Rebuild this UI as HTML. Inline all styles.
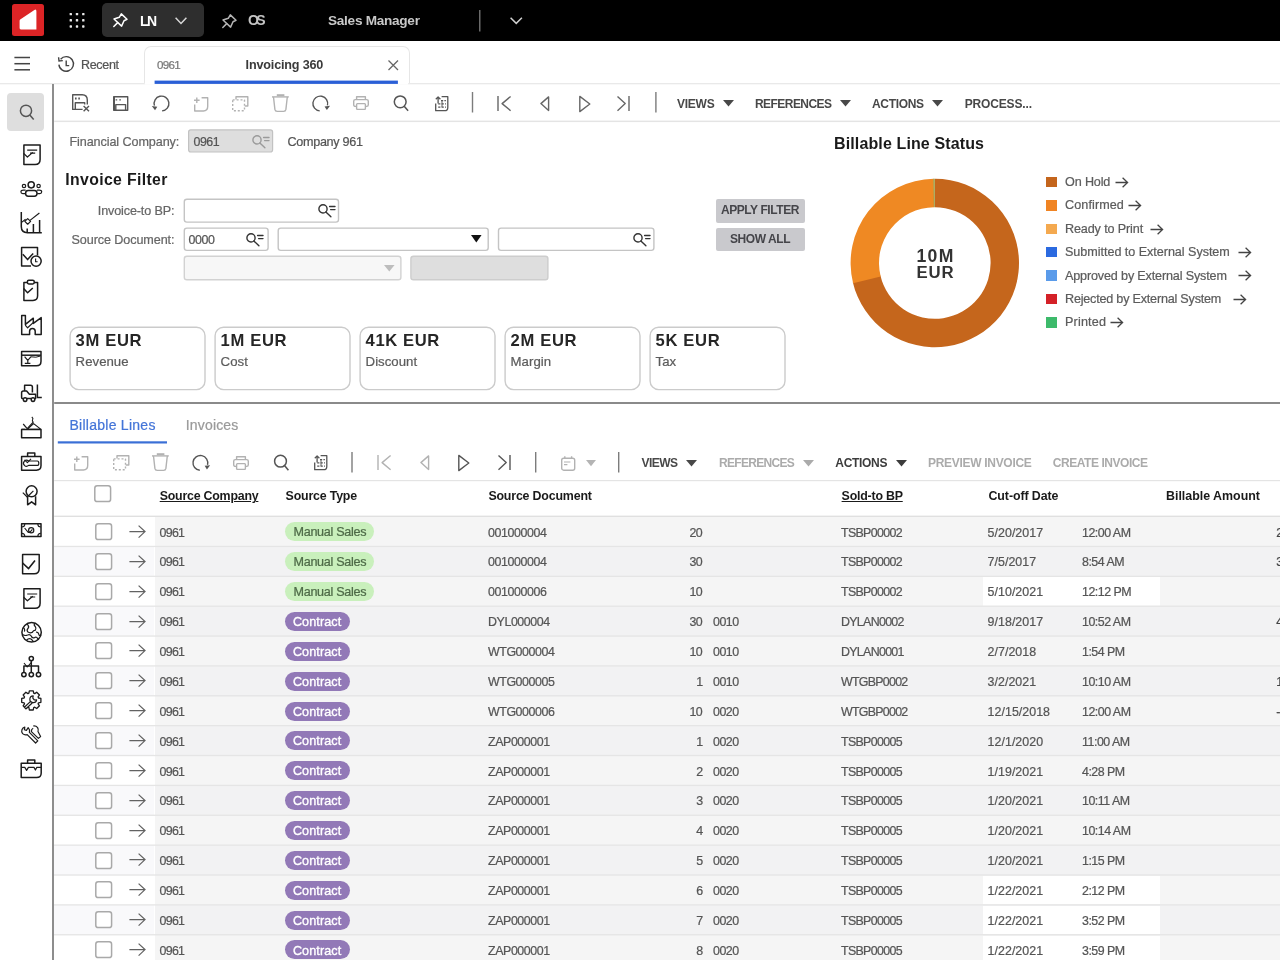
<!DOCTYPE html>
<html><head><meta charset="utf-8"><title>Invoicing 360</title><style>
html,body{margin:0;padding:0;background:#fff;}
body{font-family:"Liberation Sans",sans-serif;}
#root{position:relative;width:1280px;height:960px;overflow:hidden;background:#fff;will-change:transform;}
.t{position:absolute;white-space:nowrap;line-height:1;-webkit-text-stroke:0.22px;}
.tb{-webkit-text-stroke:0;}
.b{position:absolute;box-sizing:border-box;}
svg{overflow:visible;}
</style></head><body><div id="root">
<div class="b" style="left:0px;top:0px;width:1280px;height:40.8px;background:#000;"></div>
<div class="b" style="left:12.2px;top:4px;width:31.7px;height:31.9px;background:#dc2426;border-radius:2.5px;"></div>
<svg class="b" style="left:12px;top:4px;" width="32" height="32" viewBox="0 0 32 32"><path d="M8.2 15.6 L22.4 5.9 Q24.4 4.9 24.4 7.2 L24.4 25.4 L8.9 25.4 Q7.6 25.4 7.6 24.1 L7.6 17 Q7.6 16 8.2 15.6Z" fill="#fff"/></svg>
<svg class="b" style="left:0px;top:0px;" width="100" height="41" viewBox="0 0 100 41"><rect x="69.6" y="12.9" width="2.4" height="2.4" rx="0.6" fill="#e8e8e8"/><rect x="69.6" y="19.1" width="2.4" height="2.4" rx="0.6" fill="#e8e8e8"/><rect x="69.6" y="25.3" width="2.4" height="2.4" rx="0.6" fill="#e8e8e8"/><rect x="75.8" y="12.9" width="2.4" height="2.4" rx="0.6" fill="#e8e8e8"/><rect x="75.8" y="19.1" width="2.4" height="2.4" rx="0.6" fill="#e8e8e8"/><rect x="75.8" y="25.3" width="2.4" height="2.4" rx="0.6" fill="#e8e8e8"/><rect x="82.1" y="12.9" width="2.4" height="2.4" rx="0.6" fill="#e8e8e8"/><rect x="82.1" y="19.1" width="2.4" height="2.4" rx="0.6" fill="#e8e8e8"/><rect x="82.1" y="25.3" width="2.4" height="2.4" rx="0.6" fill="#e8e8e8"/></svg>
<div class="b" style="left:102px;top:3px;width:102px;height:34px;background:#2e2e2e;border-radius:5px;"></div>
<svg class="b" style="left:113px;top:13px;" width="14" height="14" viewBox="0 0 14 14"><g fill="none" stroke="#fff" stroke-width="1.5" stroke-linejoin="round" stroke-linecap="round"><path d="M8.3 0.9 L14 6.3 L11 7.7 L8.6 13.1 L1.0 6 L6.3 4.3 Z"/><path d="M4.7 9.6 L0.8 13.5"/></g></svg>
<span class="t tb" style="left:140.00px;top:14.00px;font-size:14px;color:#fff;letter-spacing:-1.663px;font-weight:700;">LN</span>
<svg class="b" style="left:174.5px;top:17.3px;" width="12" height="7.5" viewBox="0 0 12 7.5"><path d="M0.6 0.8 L6 6.4 L11.4 0.8" fill="none" stroke="#d8d8d8" stroke-width="1.5"/></svg>
<svg class="b" style="left:222px;top:13.5px;" width="14" height="14" viewBox="0 0 14 14"><g fill="none" stroke="#b4b4b4" stroke-width="1.5" stroke-linejoin="round" stroke-linecap="round"><path d="M8.3 0.9 L14 6.3 L11 7.7 L8.6 13.1 L1.0 6 L6.3 4.3 Z"/><path d="M4.7 9.6 L0.8 13.5"/></g></svg>
<span class="t tb" style="left:248.00px;top:13.00px;font-size:14px;color:#c4c4c4;letter-spacing:-2.628px;font-weight:700;">OS</span>
<span class="t tb" style="left:328.00px;top:14.00px;font-size:13.6px;color:#c8c8c8;letter-spacing:-0.271px;font-weight:700;">Sales Manager</span>
<svg class="b" style="left:510px;top:17.3px;" width="12.5" height="7.5" viewBox="0 0 12.5 7.5"><path d="M0.6 0.8 L6.25 6.4 L11.9 0.8" fill="none" stroke="#d0d0d0" stroke-width="1.5"/></svg>
<svg class="b" style="left:57px;top:54.5px;" width="18" height="18" viewBox="0 0 18 18"><path d="M3.6 4.2 A7.3 7.3 0 1 1 1.9 9.6" fill="none" stroke="#444" stroke-width="1.4"/><path d="M1.6 2.2 L2.0 6.0 L5.8 5.6" fill="none" stroke="#444" stroke-width="1.4"/><path d="M9.2 5.4 L9.2 10.6 L12.2 10.6" fill="none" stroke="#444" stroke-width="1.4"/></svg>
<span class="t" style="left:81.00px;top:59.00px;font-size:12.5px;color:#555;letter-spacing:-0.321px;">Recent</span>
<div class="b" style="left:143.5px;top:46px;width:266px;height:38.2px;background:#fff;border:1.3px solid #e6e6e6;border-bottom:none;border-radius:7px 7px 0 0;"></div>
<span class="t" style="left:157.00px;top:59.00px;font-size:11.6px;color:#777;letter-spacing:-0.735px;">0961</span>
<span class="t tb" style="left:245.60px;top:59.00px;font-size:12.6px;color:#3a3a3a;letter-spacing:-0.169px;font-weight:700;">Invoicing 360</span>
<svg class="b" style="left:388px;top:60px;" width="10.5" height="10.5" viewBox="0 0 10.5 10.5"><path d="M0.5 0.5 L10 10 M10 0.5 L0.5 10" stroke="#666" stroke-width="1.3" fill="none"/></svg>
<div class="b" style="left:7px;top:93px;width:36.5px;height:37.5px;background:#dedede;border-radius:4px;"></div>
<span class="t tb" style="left:677.00px;top:98.00px;font-size:12px;color:#484848;letter-spacing:-0.243px;font-weight:700;">VIEWS</span>
<svg class="b" style="left:722.5px;top:100px;" width="11" height="6.6" viewBox="0 0 11 6.6"><path d="M0 0 L11 0 L5.5 6.6 Z" fill="#484848"/></svg>
<span class="t tb" style="left:755.00px;top:98.00px;font-size:12px;color:#484848;letter-spacing:-0.557px;font-weight:700;">REFERENCES</span>
<svg class="b" style="left:839.6px;top:100px;" width="11" height="6.6" viewBox="0 0 11 6.6"><path d="M0 0 L11 0 L5.5 6.6 Z" fill="#484848"/></svg>
<span class="t tb" style="left:872.00px;top:98.00px;font-size:12px;color:#484848;letter-spacing:-0.333px;font-weight:700;">ACTIONS</span>
<svg class="b" style="left:932.3px;top:100px;" width="11" height="6.6" viewBox="0 0 11 6.6"><path d="M0 0 L11 0 L5.5 6.6 Z" fill="#484848"/></svg>
<span class="t tb" style="left:964.70px;top:98.00px;font-size:12px;color:#484848;letter-spacing:-0.154px;font-weight:700;">PROCESS...</span>
<span class="t" style="left:69.40px;top:136.00px;font-size:12.6px;color:#666;letter-spacing:-0.080px;">Financial Company:</span>
<svg class="b" style="left:0px;top:0px;" width="1" height="1" viewBox="0 0 1 1"><rect x="188.60" y="129.90" width="84.00" height="22.10" rx="2.2" fill="#dedede" stroke="#c2c2c2" stroke-width="1.2"/></svg>
<span class="t" style="left:193.50px;top:136.00px;font-size:12.4px;color:#555;letter-spacing:-0.462px;">0961</span>
<span class="t" style="left:287.50px;top:136.00px;font-size:12.6px;color:#555;letter-spacing:-0.295px;">Company 961</span>
<span class="t tb" style="left:65.30px;top:172.00px;font-size:15.8px;color:#1a1a1a;letter-spacing:0.349px;font-weight:700;">Invoice Filter</span>
<span class="t" style="left:97.80px;top:205.00px;font-size:12.6px;color:#666;letter-spacing:-0.134px;">Invoice-to BP:</span>
<span class="t" style="left:71.50px;top:234.00px;font-size:12.6px;color:#666;letter-spacing:-0.090px;">Source Document:</span>
<svg class="b" style="left:0px;top:0px;" width="1" height="1" viewBox="0 0 1 1"><rect x="184.30" y="199.20" width="154.20" height="22.90" rx="2.6" fill="#fff" stroke="#c4c4c4" stroke-width="1.4"/></svg>
<svg class="b" style="left:0px;top:0px;" width="1" height="1" viewBox="0 0 1 1"><rect x="184.30" y="228.10" width="83.80" height="22.30" rx="2.6" fill="#fff" stroke="#c4c4c4" stroke-width="1.4"/></svg>
<span class="t" style="left:188.60px;top:234.00px;font-size:12.4px;color:#555;letter-spacing:-0.429px;">0000</span>
<svg class="b" style="left:0px;top:0px;" width="1" height="1" viewBox="0 0 1 1"><rect x="278.20" y="228.10" width="210.00" height="22.30" rx="2.6" fill="#fff" stroke="#c4c4c4" stroke-width="1.4"/></svg>
<svg class="b" style="left:471px;top:235.2px;" width="10.6" height="7.4" viewBox="0 0 10.6 7.4"><path d="M0 0 L10.6 0 L5.3 7.4 Z" fill="#111"/></svg>
<svg class="b" style="left:0px;top:0px;" width="1" height="1" viewBox="0 0 1 1"><rect x="498.50" y="228.10" width="155.40" height="22.30" rx="2.6" fill="#fff" stroke="#c4c4c4" stroke-width="1.4"/></svg>
<svg class="b" style="left:0px;top:0px;" width="1" height="1" viewBox="0 0 1 1"><rect x="184.30" y="256.30" width="216.60" height="23.50" rx="2.6" fill="#f7f7f7" stroke="#d2d2d2" stroke-width="1.4"/></svg>
<svg class="b" style="left:383.5px;top:264.8px;" width="10.6" height="6.6" viewBox="0 0 10.6 6.6"><path d="M0 0 L10.6 0 L5.3 6.6 Z" fill="#bdbdbd"/></svg>
<svg class="b" style="left:0px;top:0px;" width="1" height="1" viewBox="0 0 1 1"><rect x="410.90" y="256.20" width="137.00" height="23.60" rx="2.6" fill="#dedede" stroke="#cdcdcd" stroke-width="1.4"/></svg>
<svg class="b" style="left:251.6px;top:135.2px;" width="17.5" height="13" viewBox="0 0 17.5 13"><g fill="none" stroke="#9a9a9a" stroke-width="1.4" stroke-linecap="round"><circle cx="5" cy="4.9" r="4.1"/><path d="M7.9 7.9 L12.9 12.7"/><path d="M11.6 2.5 L17 2.5 M12.6 5.6 L17 5.6"/></g></svg>
<svg class="b" style="left:318px;top:203.8px;" width="17.5" height="13" viewBox="0 0 17.5 13"><g fill="none" stroke="#333" stroke-width="1.4" stroke-linecap="round"><circle cx="5" cy="4.9" r="4.1"/><path d="M7.9 7.9 L12.9 12.7"/><path d="M11.6 2.5 L17 2.5 M12.6 5.6 L17 5.6"/></g></svg>
<svg class="b" style="left:246.4px;top:232.6px;" width="17.5" height="13" viewBox="0 0 17.5 13"><g fill="none" stroke="#333" stroke-width="1.4" stroke-linecap="round"><circle cx="5" cy="4.9" r="4.1"/><path d="M7.9 7.9 L12.9 12.7"/><path d="M11.6 2.5 L17 2.5 M12.6 5.6 L17 5.6"/></g></svg>
<svg class="b" style="left:633px;top:232.6px;" width="17.5" height="13" viewBox="0 0 17.5 13"><g fill="none" stroke="#333" stroke-width="1.4" stroke-linecap="round"><circle cx="5" cy="4.9" r="4.1"/><path d="M7.9 7.9 L12.9 12.7"/><path d="M11.6 2.5 L17 2.5 M12.6 5.6 L17 5.6"/></g></svg>
<div class="b" style="left:715.6px;top:198.8px;width:89.2px;height:23.8px;background:#c9c9cd;border-radius:2px;"></div>
<span class="t tb" style="left:720.90px;top:204.00px;font-size:12px;color:#45454a;letter-spacing:-0.421px;font-weight:700;">APPLY FILTER</span>
<div class="b" style="left:715.6px;top:227.9px;width:89.2px;height:23px;background:#c9c9cd;border-radius:2px;"></div>
<span class="t tb" style="left:730.00px;top:233.00px;font-size:12px;color:#45454a;letter-spacing:-0.421px;font-weight:700;">SHOW ALL</span>
<svg class="b" style="left:0px;top:0px;" width="1" height="1" viewBox="0 0 1 1"><rect x="70.10" y="327.20" width="134.90" height="62.40" rx="8.5" fill="#fff" stroke="#cbcbcb" stroke-width="1.4"/></svg>
<span class="t tb" style="left:75.60px;top:333.00px;font-size:16.6px;color:#262626;letter-spacing:0.656px;font-weight:700;">3M EUR</span>
<span class="t" style="left:75.60px;top:355.00px;font-size:13.2px;color:#5c5c5c;letter-spacing:0.027px;">Revenue</span>
<svg class="b" style="left:0px;top:0px;" width="1" height="1" viewBox="0 0 1 1"><rect x="215.10" y="327.20" width="134.90" height="62.40" rx="8.5" fill="#fff" stroke="#cbcbcb" stroke-width="1.4"/></svg>
<span class="t tb" style="left:220.60px;top:333.00px;font-size:16.6px;color:#262626;letter-spacing:0.656px;font-weight:700;">1M EUR</span>
<span class="t" style="left:220.60px;top:355.00px;font-size:13.2px;color:#5c5c5c;letter-spacing:0.027px;">Cost</span>
<svg class="b" style="left:0px;top:0px;" width="1" height="1" viewBox="0 0 1 1"><rect x="360.10" y="327.20" width="134.90" height="62.40" rx="8.5" fill="#fff" stroke="#cbcbcb" stroke-width="1.4"/></svg>
<span class="t tb" style="left:365.60px;top:333.00px;font-size:16.6px;color:#262626;letter-spacing:0.611px;font-weight:700;">41K EUR</span>
<span class="t" style="left:365.60px;top:355.00px;font-size:13.2px;color:#5c5c5c;letter-spacing:0.022px;">Discount</span>
<svg class="b" style="left:0px;top:0px;" width="1" height="1" viewBox="0 0 1 1"><rect x="505.10" y="327.20" width="134.90" height="62.40" rx="8.5" fill="#fff" stroke="#cbcbcb" stroke-width="1.4"/></svg>
<span class="t tb" style="left:510.60px;top:333.00px;font-size:16.6px;color:#262626;letter-spacing:0.656px;font-weight:700;">2M EUR</span>
<span class="t" style="left:510.60px;top:355.00px;font-size:13.2px;color:#5c5c5c;letter-spacing:0.024px;">Margin</span>
<svg class="b" style="left:0px;top:0px;" width="1" height="1" viewBox="0 0 1 1"><rect x="650.10" y="327.20" width="134.90" height="62.40" rx="8.5" fill="#fff" stroke="#cbcbcb" stroke-width="1.4"/></svg>
<span class="t tb" style="left:655.60px;top:333.00px;font-size:16.6px;color:#262626;letter-spacing:0.636px;font-weight:700;">5K EUR</span>
<span class="t" style="left:655.60px;top:355.00px;font-size:13.2px;color:#5c5c5c;letter-spacing:0.031px;">Tax</span>
<span class="t tb" style="left:834.00px;top:136.00px;font-size:16px;color:#1a1a1a;letter-spacing:0.127px;font-weight:700;">Billable Line Status</span>
<svg class="b" style="left:0px;top:0px;pointer-events:none;" width="1280" height="400" viewBox="0 0 1280 400"><path d="M934.80 178.80 A84.2 84.2 0 1 1 852.76 281.94 L880.43 275.55 A55.8 55.8 0 1 0 934.80 207.20Z" fill="#c5661c"/><path d="M853.10 283.37 A84.2 84.2 0 0 1 933.77 178.81 L934.12 207.20 A55.8 55.8 0 0 0 880.66 276.50Z" fill="#ef8923"/><path d="M933.33 178.81 A84.2 84.2 0 0 1 934.80 178.80 L934.80 207.20 A55.8 55.8 0 0 0 933.83 207.21Z" fill="#9aa04a"/></svg>
<span class="t tb" style="left:916.40px;top:248.00px;font-size:17.6px;color:#333;letter-spacing:1.381px;font-weight:700;">10M</span>
<span class="t tb" style="left:916.40px;top:265.00px;font-size:16.8px;color:#333;letter-spacing:0.864px;font-weight:700;">EUR</span>
<div class="b" style="left:1046.3px;top:176.60000000000002px;width:10.5px;height:10.5px;background:#c4651c;"></div>
<span class="t" style="left:1065.00px;top:176.00px;font-size:12.6px;color:#5c5c5c;letter-spacing:-0.137px;">On Hold</span>
<svg class="b" style="left:1115.4px;top:176.60000000000002px;" width="13.2" height="11" viewBox="0 0 13.2 11"><path d="M0.5 5.5 L12.4 5.5 M7.6 0.7 L12.6 5.5 L7.6 10.3" fill="none" stroke="#444" stroke-width="1.3"/></svg>
<div class="b" style="left:1046.3px;top:200.05px;width:10.5px;height:10.5px;background:#f08423;"></div>
<span class="t" style="left:1065.00px;top:199.00px;font-size:12.6px;color:#5c5c5c;letter-spacing:0.097px;">Confirmed</span>
<svg class="b" style="left:1127.8px;top:200.05px;" width="13.2" height="11" viewBox="0 0 13.2 11"><path d="M0.5 5.5 L12.4 5.5 M7.6 0.7 L12.6 5.5 L7.6 10.3" fill="none" stroke="#444" stroke-width="1.3"/></svg>
<div class="b" style="left:1046.3px;top:223.50000000000003px;width:10.5px;height:10.5px;background:#f4a94f;"></div>
<span class="t" style="left:1065.00px;top:223.00px;font-size:12.6px;color:#5c5c5c;letter-spacing:-0.126px;">Ready to Print</span>
<svg class="b" style="left:1149.8px;top:223.50000000000003px;" width="13.2" height="11" viewBox="0 0 13.2 11"><path d="M0.5 5.5 L12.4 5.5 M7.6 0.7 L12.6 5.5 L7.6 10.3" fill="none" stroke="#444" stroke-width="1.3"/></svg>
<div class="b" style="left:1046.3px;top:246.95000000000002px;width:10.5px;height:10.5px;background:#2b6ae0;"></div>
<span class="t" style="left:1065.00px;top:246.00px;font-size:12.6px;color:#5c5c5c;letter-spacing:-0.040px;">Submitted to External System</span>
<svg class="b" style="left:1238px;top:246.95000000000002px;" width="13.2" height="11" viewBox="0 0 13.2 11"><path d="M0.5 5.5 L12.4 5.5 M7.6 0.7 L12.6 5.5 L7.6 10.3" fill="none" stroke="#444" stroke-width="1.3"/></svg>
<div class="b" style="left:1046.3px;top:270.40000000000003px;width:10.5px;height:10.5px;background:#5a9bea;"></div>
<span class="t" style="left:1065.00px;top:270.00px;font-size:12.6px;color:#5c5c5c;letter-spacing:-0.153px;">Approved by External System</span>
<svg class="b" style="left:1238px;top:270.40000000000003px;" width="13.2" height="11" viewBox="0 0 13.2 11"><path d="M0.5 5.5 L12.4 5.5 M7.6 0.7 L12.6 5.5 L7.6 10.3" fill="none" stroke="#444" stroke-width="1.3"/></svg>
<div class="b" style="left:1046.3px;top:293.85px;width:10.5px;height:10.5px;background:#d42128;"></div>
<span class="t" style="left:1065.00px;top:293.00px;font-size:12.6px;color:#5c5c5c;letter-spacing:-0.207px;">Rejected by External System</span>
<svg class="b" style="left:1233.2px;top:293.85px;" width="13.2" height="11" viewBox="0 0 13.2 11"><path d="M0.5 5.5 L12.4 5.5 M7.6 0.7 L12.6 5.5 L7.6 10.3" fill="none" stroke="#444" stroke-width="1.3"/></svg>
<div class="b" style="left:1046.3px;top:317.3px;width:10.5px;height:10.5px;background:#3dba6b;"></div>
<span class="t" style="left:1065.00px;top:316.00px;font-size:12.6px;color:#5c5c5c;letter-spacing:0.179px;">Printed</span>
<svg class="b" style="left:1109.8px;top:317.3px;" width="13.2" height="11" viewBox="0 0 13.2 11"><path d="M0.5 5.5 L12.4 5.5 M7.6 0.7 L12.6 5.5 L7.6 10.3" fill="none" stroke="#444" stroke-width="1.3"/></svg>
<span class="t" style="left:69.40px;top:418.00px;font-size:14px;color:#4475d8;letter-spacing:0.269px;">Billable Lines</span>
<span class="t" style="left:185.80px;top:418.00px;font-size:14px;color:#9a9a9a;letter-spacing:0.163px;">Invoices</span>
<span class="t tb" style="left:641.60px;top:457.00px;font-size:12px;color:#484848;letter-spacing:-0.593px;font-weight:700;">VIEWS</span>
<svg class="b" style="left:685.8px;top:459.6px;" width="11" height="6.6" viewBox="0 0 11 6.6"><path d="M0 0 L11 0 L5.5 6.6 Z" fill="#484848"/></svg>
<span class="t tb" style="left:719.00px;top:457.00px;font-size:12px;color:#ababab;letter-spacing:-0.702px;font-weight:700;">REFERENCES</span>
<svg class="b" style="left:803px;top:459.6px;" width="11" height="6.6" viewBox="0 0 11 6.6"><path d="M0 0 L11 0 L5.5 6.6 Z" fill="#ababab"/></svg>
<span class="t tb" style="left:835.30px;top:457.00px;font-size:12px;color:#3c3c3c;letter-spacing:-0.317px;font-weight:700;">ACTIONS</span>
<svg class="b" style="left:896px;top:459.6px;" width="11" height="6.6" viewBox="0 0 11 6.6"><path d="M0 0 L11 0 L5.5 6.6 Z" fill="#3c3c3c"/></svg>
<span class="t tb" style="left:928.00px;top:457.00px;font-size:12px;color:#ababab;letter-spacing:-0.301px;font-weight:700;">PREVIEW INVOICE</span>
<span class="t tb" style="left:1052.80px;top:457.00px;font-size:12px;color:#ababab;letter-spacing:-0.456px;font-weight:700;">CREATE INVOICE</span>
<svg class="b" style="left:585.5px;top:459.6px;" width="10" height="6.2" viewBox="0 0 10 6.2"><path d="M0 0 L10 0 L5 6.2 Z" fill="#b4b4b4"/></svg>
<span class="t tb" style="left:159.70px;top:490.00px;font-size:12.4px;color:#1a1a1a;letter-spacing:-0.229px;font-weight:700;text-decoration:underline;text-decoration-thickness:1px;text-underline-offset:1px;">Source Company</span>
<span class="t tb" style="left:285.60px;top:490.00px;font-size:12.4px;color:#1a1a1a;letter-spacing:-0.191px;font-weight:700;">Source Type</span>
<span class="t tb" style="left:488.40px;top:490.00px;font-size:12.4px;color:#1a1a1a;letter-spacing:-0.179px;font-weight:700;">Source Document</span>
<span class="t tb" style="left:841.60px;top:490.00px;font-size:12.4px;color:#1a1a1a;letter-spacing:-0.219px;font-weight:700;text-decoration:underline;text-decoration-thickness:1px;text-underline-offset:1px;">Sold-to BP</span>
<span class="t tb" style="left:988.50px;top:490.00px;font-size:12.4px;color:#1a1a1a;letter-spacing:-0.086px;font-weight:700;">Cut-off Date</span>
<span class="t tb" style="left:1166.00px;top:490.00px;font-size:12.4px;color:#1a1a1a;letter-spacing:0.006px;font-weight:700;">Billable Amount</span>
<svg class="b" style="left:93.5px;top:485.2px;" width="17.4" height="17.4" viewBox="0 0 17.4 17.4"><rect x="0.8" y="0.8" width="15.8" height="15.8" rx="2.4" fill="#fff" stroke="#a9a9a9" stroke-width="1.5"/></svg>
<div class="b" style="left:54.2px;top:516.8px;width:100.3px;height:29.9px;background:#ffffff;"></div>
<div class="b" style="left:154.5px;top:516.8px;width:1126px;height:29.9px;background:#f5f5f5;"></div>
<svg class="b" style="left:94.8px;top:522.9999999999999px;" width="17.4" height="17.4" viewBox="0 0 17.4 17.4"><rect x="0.8" y="0.8" width="15.8" height="15.8" rx="2.4" fill="#fff" stroke="#a9a9a9" stroke-width="1.5"/></svg>
<svg class="b" style="left:128.7px;top:524.9px;" width="17" height="13.2" viewBox="0 0 17 13.2"><path d="M0.4 6.6 L15.8 6.6 M9.6 0.6 L16 6.6 L9.6 12.6" fill="none" stroke="#626262" stroke-width="1.25"/></svg>
<span class="t" style="left:159.50px;top:527.00px;font-size:12.4px;color:#555;letter-spacing:-0.695px;">0961</span>
<div class="b" style="left:284.6px;top:522.3px;width:89.6px;height:19px;background:#c9f0bc;border-radius:10px;"></div>
<span class="t" style="left:293.50px;top:526.00px;font-size:12.6px;color:#4d6a47;letter-spacing:-0.304px;">Manual Sales</span>
<span class="t" style="left:488.00px;top:527.00px;font-size:12.4px;color:#555;letter-spacing:-0.384px;">001000004</span>
<span class="t" style="left:689.59px;top:527.00px;font-size:12.4px;color:#555;letter-spacing:-0.682px;">20</span>
<span class="t" style="left:841.00px;top:527.00px;font-size:12.4px;color:#555;letter-spacing:-0.659px;">TSBP00002</span>
<span class="t" style="left:987.60px;top:527.00px;font-size:12.4px;color:#555;letter-spacing:0.042px;">5/20/2017</span>
<span class="t" style="left:1082.00px;top:527.00px;font-size:12.4px;color:#555;letter-spacing:-0.485px;">12:00 AM</span>
<span class="t" style="left:1276.30px;top:527.00px;font-size:12.4px;color:#444;">2</span>
<div class="b" style="left:54.2px;top:546.67px;width:100.3px;height:29.9px;background:#f9f9fb;"></div>
<div class="b" style="left:154.5px;top:546.67px;width:1126px;height:29.9px;background:#f2f2f3;"></div>
<svg class="b" style="left:94.8px;top:552.8699999999999px;" width="17.4" height="17.4" viewBox="0 0 17.4 17.4"><rect x="0.8" y="0.8" width="15.8" height="15.8" rx="2.4" fill="#fff" stroke="#a9a9a9" stroke-width="1.5"/></svg>
<svg class="b" style="left:128.7px;top:554.77px;" width="17" height="13.2" viewBox="0 0 17 13.2"><path d="M0.4 6.6 L15.8 6.6 M9.6 0.6 L16 6.6 L9.6 12.6" fill="none" stroke="#626262" stroke-width="1.25"/></svg>
<span class="t" style="left:159.50px;top:556.00px;font-size:12.4px;color:#555;letter-spacing:-0.695px;">0961</span>
<div class="b" style="left:284.6px;top:552.17px;width:89.6px;height:19px;background:#c9f0bc;border-radius:10px;"></div>
<span class="t" style="left:293.50px;top:556.00px;font-size:12.6px;color:#4d6a47;letter-spacing:-0.304px;">Manual Sales</span>
<span class="t" style="left:488.00px;top:556.00px;font-size:12.4px;color:#555;letter-spacing:-0.384px;">001000004</span>
<span class="t" style="left:689.59px;top:556.00px;font-size:12.4px;color:#555;letter-spacing:-0.682px;">30</span>
<span class="t" style="left:841.00px;top:556.00px;font-size:12.4px;color:#555;letter-spacing:-0.659px;">TSBP00002</span>
<span class="t" style="left:987.60px;top:556.00px;font-size:12.4px;color:#555;letter-spacing:0.042px;">7/5/2017</span>
<span class="t" style="left:1082.00px;top:556.00px;font-size:12.4px;color:#555;letter-spacing:-0.491px;">8:54 AM</span>
<span class="t" style="left:1276.30px;top:556.00px;font-size:12.4px;color:#444;">3</span>
<div class="b" style="left:54.2px;top:576.54px;width:100.3px;height:29.9px;background:#ffffff;"></div>
<div class="b" style="left:154.5px;top:576.54px;width:1126px;height:29.9px;background:#f5f5f5;"></div>
<div class="b" style="left:982.8px;top:577.14px;width:177px;height:28.6px;background:#fff;"></div>
<svg class="b" style="left:94.8px;top:582.7399999999999px;" width="17.4" height="17.4" viewBox="0 0 17.4 17.4"><rect x="0.8" y="0.8" width="15.8" height="15.8" rx="2.4" fill="#fff" stroke="#a9a9a9" stroke-width="1.5"/></svg>
<svg class="b" style="left:128.7px;top:584.64px;" width="17" height="13.2" viewBox="0 0 17 13.2"><path d="M0.4 6.6 L15.8 6.6 M9.6 0.6 L16 6.6 L9.6 12.6" fill="none" stroke="#626262" stroke-width="1.25"/></svg>
<span class="t" style="left:159.50px;top:586.00px;font-size:12.4px;color:#555;letter-spacing:-0.695px;">0961</span>
<div class="b" style="left:284.6px;top:582.04px;width:89.6px;height:19px;background:#c9f0bc;border-radius:10px;"></div>
<span class="t" style="left:293.50px;top:586.00px;font-size:12.6px;color:#4d6a47;letter-spacing:-0.304px;">Manual Sales</span>
<span class="t" style="left:488.00px;top:586.00px;font-size:12.4px;color:#555;letter-spacing:-0.384px;">001000006</span>
<span class="t" style="left:689.59px;top:586.00px;font-size:12.4px;color:#555;letter-spacing:-0.682px;">10</span>
<span class="t" style="left:841.00px;top:586.00px;font-size:12.4px;color:#555;letter-spacing:-0.659px;">TSBP00002</span>
<span class="t" style="left:987.60px;top:586.00px;font-size:12.4px;color:#555;letter-spacing:0.042px;">5/10/2021</span>
<span class="t" style="left:1082.00px;top:586.00px;font-size:12.4px;color:#555;letter-spacing:-0.491px;">12:12 PM</span>
<div class="b" style="left:54.2px;top:606.41px;width:100.3px;height:29.9px;background:#f9f9fb;"></div>
<div class="b" style="left:154.5px;top:606.41px;width:1126px;height:29.9px;background:#f2f2f3;"></div>
<svg class="b" style="left:94.8px;top:612.6099999999999px;" width="17.4" height="17.4" viewBox="0 0 17.4 17.4"><rect x="0.8" y="0.8" width="15.8" height="15.8" rx="2.4" fill="#fff" stroke="#a9a9a9" stroke-width="1.5"/></svg>
<svg class="b" style="left:128.7px;top:614.51px;" width="17" height="13.2" viewBox="0 0 17 13.2"><path d="M0.4 6.6 L15.8 6.6 M9.6 0.6 L16 6.6 L9.6 12.6" fill="none" stroke="#626262" stroke-width="1.25"/></svg>
<span class="t" style="left:159.50px;top:616.00px;font-size:12.4px;color:#555;letter-spacing:-0.695px;">0961</span>
<div class="b" style="left:284.6px;top:611.91px;width:65.2px;height:19px;background:#9279b7;border-radius:10px;"></div>
<span class="t" style="left:292.90px;top:616.00px;font-size:12.6px;color:#fff;letter-spacing:0.111px;-webkit-text-stroke:0.35px #fff;">Contract</span>
<span class="t" style="left:488.00px;top:616.00px;font-size:12.4px;color:#555;letter-spacing:-0.405px;">DYL000004</span>
<span class="t" style="left:689.59px;top:616.00px;font-size:12.4px;color:#555;letter-spacing:-0.682px;">30</span>
<span class="t" style="left:713.00px;top:616.00px;font-size:12.4px;color:#555;letter-spacing:-0.455px;">0010</span>
<span class="t" style="left:841.00px;top:616.00px;font-size:12.4px;color:#555;letter-spacing:-0.679px;">DYLAN0002</span>
<span class="t" style="left:987.60px;top:616.00px;font-size:12.4px;color:#555;letter-spacing:0.042px;">9/18/2017</span>
<span class="t" style="left:1082.00px;top:616.00px;font-size:12.4px;color:#555;letter-spacing:-0.485px;">10:52 AM</span>
<span class="t" style="left:1276.30px;top:616.00px;font-size:12.4px;color:#444;">4</span>
<div class="b" style="left:54.2px;top:636.28px;width:100.3px;height:29.9px;background:#ffffff;"></div>
<div class="b" style="left:154.5px;top:636.28px;width:1126px;height:29.9px;background:#f5f5f5;"></div>
<svg class="b" style="left:94.8px;top:642.4799999999999px;" width="17.4" height="17.4" viewBox="0 0 17.4 17.4"><rect x="0.8" y="0.8" width="15.8" height="15.8" rx="2.4" fill="#fff" stroke="#a9a9a9" stroke-width="1.5"/></svg>
<svg class="b" style="left:128.7px;top:644.38px;" width="17" height="13.2" viewBox="0 0 17 13.2"><path d="M0.4 6.6 L15.8 6.6 M9.6 0.6 L16 6.6 L9.6 12.6" fill="none" stroke="#626262" stroke-width="1.25"/></svg>
<span class="t" style="left:159.50px;top:646.00px;font-size:12.4px;color:#555;letter-spacing:-0.695px;">0961</span>
<div class="b" style="left:284.6px;top:641.78px;width:65.2px;height:19px;background:#9279b7;border-radius:10px;"></div>
<span class="t" style="left:292.90px;top:646.00px;font-size:12.6px;color:#fff;letter-spacing:0.111px;-webkit-text-stroke:0.35px #fff;">Contract</span>
<span class="t" style="left:488.00px;top:646.00px;font-size:12.4px;color:#555;letter-spacing:-0.434px;">WTG000004</span>
<span class="t" style="left:689.59px;top:646.00px;font-size:12.4px;color:#555;letter-spacing:-0.682px;">10</span>
<span class="t" style="left:713.00px;top:646.00px;font-size:12.4px;color:#555;letter-spacing:-0.455px;">0010</span>
<span class="t" style="left:841.00px;top:646.00px;font-size:12.4px;color:#555;letter-spacing:-0.679px;">DYLAN0001</span>
<span class="t" style="left:987.60px;top:646.00px;font-size:12.4px;color:#555;letter-spacing:0.042px;">2/7/2018</span>
<span class="t" style="left:1082.00px;top:646.00px;font-size:12.4px;color:#555;letter-spacing:-0.498px;">1:54 PM</span>
<div class="b" style="left:54.2px;top:666.15px;width:100.3px;height:29.9px;background:#f9f9fb;"></div>
<div class="b" style="left:154.5px;top:666.15px;width:1126px;height:29.9px;background:#f2f2f3;"></div>
<svg class="b" style="left:94.8px;top:672.3499999999999px;" width="17.4" height="17.4" viewBox="0 0 17.4 17.4"><rect x="0.8" y="0.8" width="15.8" height="15.8" rx="2.4" fill="#fff" stroke="#a9a9a9" stroke-width="1.5"/></svg>
<svg class="b" style="left:128.7px;top:674.25px;" width="17" height="13.2" viewBox="0 0 17 13.2"><path d="M0.4 6.6 L15.8 6.6 M9.6 0.6 L16 6.6 L9.6 12.6" fill="none" stroke="#626262" stroke-width="1.25"/></svg>
<span class="t" style="left:159.50px;top:676.00px;font-size:12.4px;color:#555;letter-spacing:-0.695px;">0961</span>
<div class="b" style="left:284.6px;top:671.65px;width:65.2px;height:19px;background:#9279b7;border-radius:10px;"></div>
<span class="t" style="left:292.90px;top:676.00px;font-size:12.6px;color:#fff;letter-spacing:0.111px;-webkit-text-stroke:0.35px #fff;">Contract</span>
<span class="t" style="left:488.00px;top:676.00px;font-size:12.4px;color:#555;letter-spacing:-0.434px;">WTG000005</span>
<span class="t" style="left:696.14px;top:676.00px;font-size:12.4px;color:#555;letter-spacing:-0.341px;">1</span>
<span class="t" style="left:713.00px;top:676.00px;font-size:12.4px;color:#555;letter-spacing:-0.455px;">0010</span>
<span class="t" style="left:841.00px;top:676.00px;font-size:12.4px;color:#555;letter-spacing:-0.720px;">WTGBP0002</span>
<span class="t" style="left:987.60px;top:676.00px;font-size:12.4px;color:#555;letter-spacing:0.042px;">3/2/2021</span>
<span class="t" style="left:1082.00px;top:676.00px;font-size:12.4px;color:#555;letter-spacing:-0.485px;">10:10 AM</span>
<span class="t" style="left:1276.30px;top:676.00px;font-size:12.4px;color:#444;">1</span>
<div class="b" style="left:54.2px;top:696.02px;width:100.3px;height:29.9px;background:#ffffff;"></div>
<div class="b" style="left:154.5px;top:696.02px;width:1126px;height:29.9px;background:#f5f5f5;"></div>
<svg class="b" style="left:94.8px;top:702.2199999999999px;" width="17.4" height="17.4" viewBox="0 0 17.4 17.4"><rect x="0.8" y="0.8" width="15.8" height="15.8" rx="2.4" fill="#fff" stroke="#a9a9a9" stroke-width="1.5"/></svg>
<svg class="b" style="left:128.7px;top:704.12px;" width="17" height="13.2" viewBox="0 0 17 13.2"><path d="M0.4 6.6 L15.8 6.6 M9.6 0.6 L16 6.6 L9.6 12.6" fill="none" stroke="#626262" stroke-width="1.25"/></svg>
<span class="t" style="left:159.50px;top:706.00px;font-size:12.4px;color:#555;letter-spacing:-0.695px;">0961</span>
<div class="b" style="left:284.6px;top:701.52px;width:65.2px;height:19px;background:#9279b7;border-radius:10px;"></div>
<span class="t" style="left:292.90px;top:706.00px;font-size:12.6px;color:#fff;letter-spacing:0.111px;-webkit-text-stroke:0.35px #fff;">Contract</span>
<span class="t" style="left:488.00px;top:706.00px;font-size:12.4px;color:#555;letter-spacing:-0.434px;">WTG000006</span>
<span class="t" style="left:689.59px;top:706.00px;font-size:12.4px;color:#555;letter-spacing:-0.682px;">10</span>
<span class="t" style="left:713.00px;top:706.00px;font-size:12.4px;color:#555;letter-spacing:-0.455px;">0020</span>
<span class="t" style="left:841.00px;top:706.00px;font-size:12.4px;color:#555;letter-spacing:-0.720px;">WTGBP0002</span>
<span class="t" style="left:987.60px;top:706.00px;font-size:12.4px;color:#555;letter-spacing:0.042px;">12/15/2018</span>
<span class="t" style="left:1082.00px;top:706.00px;font-size:12.4px;color:#555;letter-spacing:-0.485px;">12:00 AM</span>
<span class="t" style="left:1276.30px;top:706.00px;font-size:12.4px;color:#444;">-</span>
<div class="b" style="left:54.2px;top:725.89px;width:100.3px;height:29.9px;background:#f9f9fb;"></div>
<div class="b" style="left:154.5px;top:725.89px;width:1126px;height:29.9px;background:#f2f2f3;"></div>
<svg class="b" style="left:94.8px;top:732.0899999999999px;" width="17.4" height="17.4" viewBox="0 0 17.4 17.4"><rect x="0.8" y="0.8" width="15.8" height="15.8" rx="2.4" fill="#fff" stroke="#a9a9a9" stroke-width="1.5"/></svg>
<svg class="b" style="left:128.7px;top:733.99px;" width="17" height="13.2" viewBox="0 0 17 13.2"><path d="M0.4 6.6 L15.8 6.6 M9.6 0.6 L16 6.6 L9.6 12.6" fill="none" stroke="#626262" stroke-width="1.25"/></svg>
<span class="t" style="left:159.50px;top:736.00px;font-size:12.4px;color:#555;letter-spacing:-0.695px;">0961</span>
<div class="b" style="left:284.6px;top:731.39px;width:65.2px;height:19px;background:#9279b7;border-radius:10px;"></div>
<span class="t" style="left:292.90px;top:735.00px;font-size:12.6px;color:#fff;letter-spacing:0.111px;-webkit-text-stroke:0.35px #fff;">Contract</span>
<span class="t" style="left:488.00px;top:736.00px;font-size:12.4px;color:#555;letter-spacing:-0.405px;">ZAP000001</span>
<span class="t" style="left:696.14px;top:736.00px;font-size:12.4px;color:#555;letter-spacing:-0.341px;">1</span>
<span class="t" style="left:713.00px;top:736.00px;font-size:12.4px;color:#555;letter-spacing:-0.455px;">0020</span>
<span class="t" style="left:841.00px;top:736.00px;font-size:12.4px;color:#555;letter-spacing:-0.659px;">TSBP00005</span>
<span class="t" style="left:987.60px;top:736.00px;font-size:12.4px;color:#555;letter-spacing:0.042px;">12/1/2020</span>
<span class="t" style="left:1082.00px;top:736.00px;font-size:12.4px;color:#555;letter-spacing:-0.476px;">11:00 AM</span>
<div class="b" style="left:54.2px;top:755.76px;width:100.3px;height:29.9px;background:#ffffff;"></div>
<div class="b" style="left:154.5px;top:755.76px;width:1126px;height:29.9px;background:#f5f5f5;"></div>
<svg class="b" style="left:94.8px;top:761.9599999999999px;" width="17.4" height="17.4" viewBox="0 0 17.4 17.4"><rect x="0.8" y="0.8" width="15.8" height="15.8" rx="2.4" fill="#fff" stroke="#a9a9a9" stroke-width="1.5"/></svg>
<svg class="b" style="left:128.7px;top:763.86px;" width="17" height="13.2" viewBox="0 0 17 13.2"><path d="M0.4 6.6 L15.8 6.6 M9.6 0.6 L16 6.6 L9.6 12.6" fill="none" stroke="#626262" stroke-width="1.25"/></svg>
<span class="t" style="left:159.50px;top:766.00px;font-size:12.4px;color:#555;letter-spacing:-0.695px;">0961</span>
<div class="b" style="left:284.6px;top:761.26px;width:65.2px;height:19px;background:#9279b7;border-radius:10px;"></div>
<span class="t" style="left:292.90px;top:765.00px;font-size:12.6px;color:#fff;letter-spacing:0.111px;-webkit-text-stroke:0.35px #fff;">Contract</span>
<span class="t" style="left:488.00px;top:766.00px;font-size:12.4px;color:#555;letter-spacing:-0.405px;">ZAP000001</span>
<span class="t" style="left:696.14px;top:766.00px;font-size:12.4px;color:#555;letter-spacing:-0.341px;">2</span>
<span class="t" style="left:713.00px;top:766.00px;font-size:12.4px;color:#555;letter-spacing:-0.455px;">0020</span>
<span class="t" style="left:841.00px;top:766.00px;font-size:12.4px;color:#555;letter-spacing:-0.659px;">TSBP00005</span>
<span class="t" style="left:987.60px;top:766.00px;font-size:12.4px;color:#555;letter-spacing:0.042px;">1/19/2021</span>
<span class="t" style="left:1082.00px;top:766.00px;font-size:12.4px;color:#555;letter-spacing:-0.498px;">4:28 PM</span>
<div class="b" style="left:54.2px;top:785.6299999999999px;width:100.3px;height:29.9px;background:#f9f9fb;"></div>
<div class="b" style="left:154.5px;top:785.6299999999999px;width:1126px;height:29.9px;background:#f2f2f3;"></div>
<svg class="b" style="left:94.8px;top:791.8299999999998px;" width="17.4" height="17.4" viewBox="0 0 17.4 17.4"><rect x="0.8" y="0.8" width="15.8" height="15.8" rx="2.4" fill="#fff" stroke="#a9a9a9" stroke-width="1.5"/></svg>
<svg class="b" style="left:128.7px;top:793.7299999999999px;" width="17" height="13.2" viewBox="0 0 17 13.2"><path d="M0.4 6.6 L15.8 6.6 M9.6 0.6 L16 6.6 L9.6 12.6" fill="none" stroke="#626262" stroke-width="1.25"/></svg>
<span class="t" style="left:159.50px;top:795.00px;font-size:12.4px;color:#555;letter-spacing:-0.695px;">0961</span>
<div class="b" style="left:284.6px;top:791.1299999999999px;width:65.2px;height:19px;background:#9279b7;border-radius:10px;"></div>
<span class="t" style="left:292.90px;top:795.00px;font-size:12.6px;color:#fff;letter-spacing:0.111px;-webkit-text-stroke:0.35px #fff;">Contract</span>
<span class="t" style="left:488.00px;top:795.00px;font-size:12.4px;color:#555;letter-spacing:-0.405px;">ZAP000001</span>
<span class="t" style="left:696.14px;top:795.00px;font-size:12.4px;color:#555;letter-spacing:-0.341px;">3</span>
<span class="t" style="left:713.00px;top:795.00px;font-size:12.4px;color:#555;letter-spacing:-0.455px;">0020</span>
<span class="t" style="left:841.00px;top:795.00px;font-size:12.4px;color:#555;letter-spacing:-0.659px;">TSBP00005</span>
<span class="t" style="left:987.60px;top:795.00px;font-size:12.4px;color:#555;letter-spacing:0.042px;">1/20/2021</span>
<span class="t" style="left:1082.00px;top:795.00px;font-size:12.4px;color:#555;letter-spacing:-0.476px;">10:11 AM</span>
<div class="b" style="left:54.2px;top:815.5px;width:100.3px;height:29.9px;background:#ffffff;"></div>
<div class="b" style="left:154.5px;top:815.5px;width:1126px;height:29.9px;background:#f5f5f5;"></div>
<svg class="b" style="left:94.8px;top:821.6999999999999px;" width="17.4" height="17.4" viewBox="0 0 17.4 17.4"><rect x="0.8" y="0.8" width="15.8" height="15.8" rx="2.4" fill="#fff" stroke="#a9a9a9" stroke-width="1.5"/></svg>
<svg class="b" style="left:128.7px;top:823.6px;" width="17" height="13.2" viewBox="0 0 17 13.2"><path d="M0.4 6.6 L15.8 6.6 M9.6 0.6 L16 6.6 L9.6 12.6" fill="none" stroke="#626262" stroke-width="1.25"/></svg>
<span class="t" style="left:159.50px;top:825.00px;font-size:12.4px;color:#555;letter-spacing:-0.695px;">0961</span>
<div class="b" style="left:284.6px;top:821.0px;width:65.2px;height:19px;background:#9279b7;border-radius:10px;"></div>
<span class="t" style="left:292.90px;top:825.00px;font-size:12.6px;color:#fff;letter-spacing:0.111px;-webkit-text-stroke:0.35px #fff;">Contract</span>
<span class="t" style="left:488.00px;top:825.00px;font-size:12.4px;color:#555;letter-spacing:-0.405px;">ZAP000001</span>
<span class="t" style="left:696.14px;top:825.00px;font-size:12.4px;color:#555;letter-spacing:-0.341px;">4</span>
<span class="t" style="left:713.00px;top:825.00px;font-size:12.4px;color:#555;letter-spacing:-0.455px;">0020</span>
<span class="t" style="left:841.00px;top:825.00px;font-size:12.4px;color:#555;letter-spacing:-0.659px;">TSBP00005</span>
<span class="t" style="left:987.60px;top:825.00px;font-size:12.4px;color:#555;letter-spacing:0.042px;">1/20/2021</span>
<span class="t" style="left:1082.00px;top:825.00px;font-size:12.4px;color:#555;letter-spacing:-0.485px;">10:14 AM</span>
<div class="b" style="left:54.2px;top:845.3699999999999px;width:100.3px;height:29.9px;background:#f9f9fb;"></div>
<div class="b" style="left:154.5px;top:845.3699999999999px;width:1126px;height:29.9px;background:#f2f2f3;"></div>
<svg class="b" style="left:94.8px;top:851.5699999999998px;" width="17.4" height="17.4" viewBox="0 0 17.4 17.4"><rect x="0.8" y="0.8" width="15.8" height="15.8" rx="2.4" fill="#fff" stroke="#a9a9a9" stroke-width="1.5"/></svg>
<svg class="b" style="left:128.7px;top:853.4699999999999px;" width="17" height="13.2" viewBox="0 0 17 13.2"><path d="M0.4 6.6 L15.8 6.6 M9.6 0.6 L16 6.6 L9.6 12.6" fill="none" stroke="#626262" stroke-width="1.25"/></svg>
<span class="t" style="left:159.50px;top:855.00px;font-size:12.4px;color:#555;letter-spacing:-0.695px;">0961</span>
<div class="b" style="left:284.6px;top:850.8699999999999px;width:65.2px;height:19px;background:#9279b7;border-radius:10px;"></div>
<span class="t" style="left:292.90px;top:855.00px;font-size:12.6px;color:#fff;letter-spacing:0.111px;-webkit-text-stroke:0.35px #fff;">Contract</span>
<span class="t" style="left:488.00px;top:855.00px;font-size:12.4px;color:#555;letter-spacing:-0.405px;">ZAP000001</span>
<span class="t" style="left:696.14px;top:855.00px;font-size:12.4px;color:#555;letter-spacing:-0.341px;">5</span>
<span class="t" style="left:713.00px;top:855.00px;font-size:12.4px;color:#555;letter-spacing:-0.455px;">0020</span>
<span class="t" style="left:841.00px;top:855.00px;font-size:12.4px;color:#555;letter-spacing:-0.659px;">TSBP00005</span>
<span class="t" style="left:987.60px;top:855.00px;font-size:12.4px;color:#555;letter-spacing:0.042px;">1/20/2021</span>
<span class="t" style="left:1082.00px;top:855.00px;font-size:12.4px;color:#555;letter-spacing:-0.498px;">1:15 PM</span>
<div class="b" style="left:54.2px;top:875.24px;width:100.3px;height:29.9px;background:#ffffff;"></div>
<div class="b" style="left:154.5px;top:875.24px;width:1126px;height:29.9px;background:#f5f5f5;"></div>
<div class="b" style="left:982.8px;top:875.84px;width:177px;height:28.6px;background:#fff;"></div>
<svg class="b" style="left:94.8px;top:881.4399999999999px;" width="17.4" height="17.4" viewBox="0 0 17.4 17.4"><rect x="0.8" y="0.8" width="15.8" height="15.8" rx="2.4" fill="#fff" stroke="#a9a9a9" stroke-width="1.5"/></svg>
<svg class="b" style="left:128.7px;top:883.34px;" width="17" height="13.2" viewBox="0 0 17 13.2"><path d="M0.4 6.6 L15.8 6.6 M9.6 0.6 L16 6.6 L9.6 12.6" fill="none" stroke="#626262" stroke-width="1.25"/></svg>
<span class="t" style="left:159.50px;top:885.00px;font-size:12.4px;color:#555;letter-spacing:-0.695px;">0961</span>
<div class="b" style="left:284.6px;top:880.74px;width:65.2px;height:19px;background:#9279b7;border-radius:10px;"></div>
<span class="t" style="left:292.90px;top:885.00px;font-size:12.6px;color:#fff;letter-spacing:0.111px;-webkit-text-stroke:0.35px #fff;">Contract</span>
<span class="t" style="left:488.00px;top:885.00px;font-size:12.4px;color:#555;letter-spacing:-0.405px;">ZAP000001</span>
<span class="t" style="left:696.14px;top:885.00px;font-size:12.4px;color:#555;letter-spacing:-0.341px;">6</span>
<span class="t" style="left:713.00px;top:885.00px;font-size:12.4px;color:#555;letter-spacing:-0.455px;">0020</span>
<span class="t" style="left:841.00px;top:885.00px;font-size:12.4px;color:#555;letter-spacing:-0.659px;">TSBP00005</span>
<span class="t" style="left:987.60px;top:885.00px;font-size:12.4px;color:#555;letter-spacing:0.042px;">1/22/2021</span>
<span class="t" style="left:1082.00px;top:885.00px;font-size:12.4px;color:#555;letter-spacing:-0.498px;">2:12 PM</span>
<div class="b" style="left:54.2px;top:905.1099999999999px;width:100.3px;height:29.9px;background:#f9f9fb;"></div>
<div class="b" style="left:154.5px;top:905.1099999999999px;width:1126px;height:29.9px;background:#f2f2f3;"></div>
<div class="b" style="left:982.8px;top:905.7099999999999px;width:177px;height:28.6px;background:#fff;"></div>
<svg class="b" style="left:94.8px;top:911.3099999999998px;" width="17.4" height="17.4" viewBox="0 0 17.4 17.4"><rect x="0.8" y="0.8" width="15.8" height="15.8" rx="2.4" fill="#fff" stroke="#a9a9a9" stroke-width="1.5"/></svg>
<svg class="b" style="left:128.7px;top:913.2099999999999px;" width="17" height="13.2" viewBox="0 0 17 13.2"><path d="M0.4 6.6 L15.8 6.6 M9.6 0.6 L16 6.6 L9.6 12.6" fill="none" stroke="#626262" stroke-width="1.25"/></svg>
<span class="t" style="left:159.50px;top:915.00px;font-size:12.4px;color:#555;letter-spacing:-0.695px;">0961</span>
<div class="b" style="left:284.6px;top:910.6099999999999px;width:65.2px;height:19px;background:#9279b7;border-radius:10px;"></div>
<span class="t" style="left:292.90px;top:915.00px;font-size:12.6px;color:#fff;letter-spacing:0.111px;-webkit-text-stroke:0.35px #fff;">Contract</span>
<span class="t" style="left:488.00px;top:915.00px;font-size:12.4px;color:#555;letter-spacing:-0.405px;">ZAP000001</span>
<span class="t" style="left:696.14px;top:915.00px;font-size:12.4px;color:#555;letter-spacing:-0.341px;">7</span>
<span class="t" style="left:713.00px;top:915.00px;font-size:12.4px;color:#555;letter-spacing:-0.455px;">0020</span>
<span class="t" style="left:841.00px;top:915.00px;font-size:12.4px;color:#555;letter-spacing:-0.659px;">TSBP00005</span>
<span class="t" style="left:987.60px;top:915.00px;font-size:12.4px;color:#555;letter-spacing:0.042px;">1/22/2021</span>
<span class="t" style="left:1082.00px;top:915.00px;font-size:12.4px;color:#555;letter-spacing:-0.498px;">3:52 PM</span>
<div class="b" style="left:54.2px;top:934.98px;width:100.3px;height:29.9px;background:#ffffff;"></div>
<div class="b" style="left:154.5px;top:934.98px;width:1126px;height:29.9px;background:#f5f5f5;"></div>
<div class="b" style="left:982.8px;top:935.58px;width:177px;height:28.6px;background:#fff;"></div>
<svg class="b" style="left:94.8px;top:941.18px;" width="17.4" height="17.4" viewBox="0 0 17.4 17.4"><rect x="0.8" y="0.8" width="15.8" height="15.8" rx="2.4" fill="#fff" stroke="#a9a9a9" stroke-width="1.5"/></svg>
<svg class="b" style="left:128.7px;top:943.08px;" width="17" height="13.2" viewBox="0 0 17 13.2"><path d="M0.4 6.6 L15.8 6.6 M9.6 0.6 L16 6.6 L9.6 12.6" fill="none" stroke="#626262" stroke-width="1.25"/></svg>
<span class="t" style="left:159.50px;top:945.00px;font-size:12.4px;color:#555;letter-spacing:-0.695px;">0961</span>
<div class="b" style="left:284.6px;top:940.48px;width:65.2px;height:19px;background:#9279b7;border-radius:10px;"></div>
<span class="t" style="left:292.90px;top:945.00px;font-size:12.6px;color:#fff;letter-spacing:0.111px;-webkit-text-stroke:0.35px #fff;">Contract</span>
<span class="t" style="left:488.00px;top:945.00px;font-size:12.4px;color:#555;letter-spacing:-0.405px;">ZAP000001</span>
<span class="t" style="left:696.14px;top:945.00px;font-size:12.4px;color:#555;letter-spacing:-0.341px;">8</span>
<span class="t" style="left:713.00px;top:945.00px;font-size:12.4px;color:#555;letter-spacing:-0.455px;">0020</span>
<span class="t" style="left:841.00px;top:945.00px;font-size:12.4px;color:#555;letter-spacing:-0.659px;">TSBP00005</span>
<span class="t" style="left:987.60px;top:945.00px;font-size:12.4px;color:#555;letter-spacing:0.042px;">1/22/2021</span>
<span class="t" style="left:1082.00px;top:945.00px;font-size:12.4px;color:#555;letter-spacing:-0.498px;">3:59 PM</span>
<svg class="b" style="left:72px;top:94.4px;" width="18" height="18" viewBox="0 0 18 18"><g fill="none" stroke="#555" stroke-width="1.4" stroke-linecap="butt" stroke-linejoin="round" ><path d="M10.6 15.4 H0.7 V0.7 H10.2 Q15.3 0.7 15.3 6 V10.6"/><path d="M3.3 15.4 V8.8 H12.7 V10.4"/><path d="M3.8 3.4 V5.6 M7.1 3.4 V5.6" stroke-width="1.6"/><path d="M11.6 12 L17 17.2 M17 12 L11.6 17.2"/></g></svg>
<svg class="b" style="left:113.3px;top:95.9px;" width="16" height="16" viewBox="0 0 16 16"><g fill="none" stroke="#555" stroke-width="1.4" stroke-linecap="butt" stroke-linejoin="round" ><rect x="0.7" y="0.7" width="14" height="13.6"/><path d="M2.8 14.3 V8.6 H12.6 V14.3"/><path d="M3.4 3.2 V4.6 M7.1 3.2 V4.6" stroke-width="1.6"/><path d="M1.5 1 V14" stroke-width="1"/></g></svg>
<svg class="b" style="left:0px;top:0px;" width="1" height="1" viewBox="0 0 1 1"><g fill="none" stroke="#555" stroke-width="1.4" stroke-linecap="butt" stroke-linejoin="round" ><path d="M162.10 110.90 A7.4 7.4 0 1 0 154.42 105.66"/></g><path d="M151.82 106.06 L157.32 106.66 L155.02 110.26 Z" fill="#555"/></svg>
<svg class="b" style="left:193.5px;top:96.5px;" width="15" height="15" viewBox="0 0 15 15"><g fill="none" stroke="#b2b2b2" stroke-width="1.4" stroke-linecap="butt" stroke-linejoin="round" ><path d="M7.6 0.8 H13.7 V9.6 Q13.7 14 9.4 14 H0.7 V7.4"/><path d="M2.8 0.4 V6 M0 3.2 H5.6"/></g></svg>
<svg class="b" style="left:232.3px;top:95.7px;" width="17" height="16" viewBox="0 0 17 16"><g fill="none" stroke="#b2b2b2" stroke-width="1.4" stroke-linecap="butt" stroke-linejoin="round" ><path d="M4 3.4 V0.7 H15.8 V10 H12.8"/><rect x="0.7" y="3.9" width="11.8" height="10.8" stroke-dasharray="2 1.9"/></g></svg>
<svg class="b" style="left:272px;top:93.8px;" width="17" height="18" viewBox="0 0 17 18"><g fill="none" stroke="#b2b2b2" stroke-width="1.4" stroke-linecap="butt" stroke-linejoin="round" ><path d="M0 2.9 H16.8"/><path d="M4.8 1.2 H12.4" stroke-width="2"/><path d="M1.5 3 L2.9 15.4 Q3.2 17.4 5.2 17.4 H11.6 Q13.6 17.4 13.9 15.4 L15.3 3"/></g></svg>
<svg class="b" style="left:0px;top:0px;" width="1" height="1" viewBox="0 0 1 1"><g fill="none" stroke="#555" stroke-width="1.4" stroke-linecap="butt" stroke-linejoin="round" ><path d="M319.70 110.90 A7.4 7.4 0 1 1 327.45 105.42"/></g><path d="M330.05 105.82 L324.55 106.42 L326.85 110.02 Z" fill="#555"/></svg>
<svg class="b" style="left:353px;top:96.2px;" width="16" height="14" viewBox="0 0 16 14"><g fill="none" stroke="#b2b2b2" stroke-width="1.4" stroke-linecap="butt" stroke-linejoin="round" ><path d="M3.6 3.4 V0.7 H12.4 V3.4"/><rect x="0.7" y="3.6" width="14.6" height="6.8" rx="1.6"/><rect x="3.6" y="7.6" width="8.8" height="5.8" rx="0.8" fill="#fff"/></g></svg>
<svg class="b" style="left:0px;top:0px;" width="1" height="1" viewBox="0 0 1 1"><g fill="none" stroke="#555" stroke-width="1.5" stroke-linecap="butt" stroke-linejoin="round" ><circle cx="400.2" cy="101.8" r="5.9"/><path d="M404.21 106.17 L408.11 110.77"/></g></svg>
<svg class="b" style="left:434.6px;top:95.8px;" width="14" height="16" viewBox="0 0 14 16"><g fill="none" stroke="#555" stroke-width="1.3" stroke-linecap="butt" stroke-linejoin="round" ><path d="M6.6 0.7 H12.8 V11.4 Q12.8 14.7 9.6 14.7 H0.7 V7.6"/><path d="M3.1 7.4 V1 M0.8 3.2 L3.1 0.9 L5.4 3.2"/><path d="M6 4.6 H10.9 M3.2 7.9 H10.9 M3.2 11.2 H10.9" stroke-dasharray="2.2 1.2"/><path d="M7 4.6 V11.2" stroke-width="0.9"/></g></svg>
<svg class="b" style="left:497px;top:96px;" width="14" height="16" viewBox="0 0 14 16"><g fill="none" stroke="#666" stroke-width="1.4" stroke-linecap="butt" stroke-linejoin="round" ><path d="M1 0.1 V15.1"/><path d="M13.6 0.5 L5.1 7.6 L13.6 14.7"/></g></svg>
<svg class="b" style="left:540px;top:96px;" width="10" height="16" viewBox="0 0 10 16"><g fill="none" stroke="#666" stroke-width="1.4" stroke-linecap="butt" stroke-linejoin="round" ><path d="M8.6 0.9 L0.9 7.6 L8.6 14.4 Z"/></g></svg>
<svg class="b" style="left:579px;top:95.5px;" width="12" height="16" viewBox="0 0 12 16"><g fill="none" stroke="#666" stroke-width="1.4" stroke-linecap="butt" stroke-linejoin="round" ><path d="M0.8 0.4 L10.8 8 L0.8 15.6 Z"/></g></svg>
<svg class="b" style="left:617px;top:96px;" width="14" height="16" viewBox="0 0 14 16"><g fill="none" stroke="#666" stroke-width="1.4" stroke-linecap="butt" stroke-linejoin="round" ><path d="M12 0.1 V15.1"/><path d="M0.5 0.5 L8.2 7.6 L0.5 14.7"/></g></svg>
<svg class="b" style="left:73.6px;top:455.9px;" width="15" height="15" viewBox="0 0 15 15"><g fill="none" stroke="#b2b2b2" stroke-width="1.4" stroke-linecap="butt" stroke-linejoin="round" ><path d="M7.6 0.8 H13.7 V9.6 Q13.7 14 9.4 14 H0.7 V7.4"/><path d="M2.8 0.4 V6 M0 3.2 H5.6"/></g></svg>
<svg class="b" style="left:112.5px;top:455.09999999999997px;" width="17" height="16" viewBox="0 0 17 16"><g fill="none" stroke="#b2b2b2" stroke-width="1.4" stroke-linecap="butt" stroke-linejoin="round" ><path d="M4 3.4 V0.7 H15.8 V10 H12.8"/><rect x="0.7" y="3.9" width="11.8" height="10.8" stroke-dasharray="2 1.9"/></g></svg>
<svg class="b" style="left:152.3px;top:453.2px;" width="17" height="18" viewBox="0 0 17 18"><g fill="none" stroke="#b2b2b2" stroke-width="1.4" stroke-linecap="butt" stroke-linejoin="round" ><path d="M0 2.9 H16.8"/><path d="M4.8 1.2 H12.4" stroke-width="2"/><path d="M1.5 3 L2.9 15.4 Q3.2 17.4 5.2 17.4 H11.6 Q13.6 17.4 13.9 15.4 L15.3 3"/></g></svg>
<svg class="b" style="left:0px;top:0px;" width="1" height="1" viewBox="0 0 1 1"><g fill="none" stroke="#555" stroke-width="1.4" stroke-linecap="butt" stroke-linejoin="round" ><path d="M199.80 470.30 A7.4 7.4 0 1 1 207.55 464.82"/></g><path d="M210.15 465.22 L204.65 465.82 L206.95 469.42 Z" fill="#555"/></svg>
<svg class="b" style="left:232.5px;top:455.59999999999997px;" width="16" height="14" viewBox="0 0 16 14"><g fill="none" stroke="#b2b2b2" stroke-width="1.4" stroke-linecap="butt" stroke-linejoin="round" ><path d="M3.6 3.4 V0.7 H12.4 V3.4"/><rect x="0.7" y="3.6" width="14.6" height="6.8" rx="1.6"/><rect x="3.6" y="7.6" width="8.8" height="5.8" rx="0.8" fill="#fff"/></g></svg>
<svg class="b" style="left:0px;top:0px;" width="1" height="1" viewBox="0 0 1 1"><g fill="none" stroke="#555" stroke-width="1.5" stroke-linecap="butt" stroke-linejoin="round" ><circle cx="280.5" cy="461.2" r="5.9"/><path d="M284.51 465.57 L288.41 470.17"/></g></svg>
<svg class="b" style="left:314px;top:454.8px;" width="14" height="16" viewBox="0 0 14 16"><g fill="none" stroke="#555" stroke-width="1.3" stroke-linecap="butt" stroke-linejoin="round" ><path d="M6.6 0.7 H12.8 V11.4 Q12.8 14.7 9.6 14.7 H0.7 V7.6"/><path d="M3.1 7.4 V1 M0.8 3.2 L3.1 0.9 L5.4 3.2"/><path d="M6 4.6 H10.9 M3.2 7.9 H10.9 M3.2 11.2 H10.9" stroke-dasharray="2.2 1.2"/><path d="M7 4.6 V11.2" stroke-width="0.9"/></g></svg>
<svg class="b" style="left:376.8px;top:455.4px;" width="14" height="16" viewBox="0 0 14 16"><g fill="none" stroke="#b2b2b2" stroke-width="1.4" stroke-linecap="butt" stroke-linejoin="round" ><path d="M1 0.1 V15.1"/><path d="M13.6 0.5 L5.1 7.6 L13.6 14.7"/></g></svg>
<svg class="b" style="left:420px;top:455.4px;" width="10" height="16" viewBox="0 0 10 16"><g fill="none" stroke="#b2b2b2" stroke-width="1.4" stroke-linecap="butt" stroke-linejoin="round" ><path d="M8.6 0.9 L0.9 7.6 L8.6 14.4 Z"/></g></svg>
<svg class="b" style="left:458.2px;top:454.9px;" width="12" height="16" viewBox="0 0 12 16"><g fill="none" stroke="#555" stroke-width="1.4" stroke-linecap="butt" stroke-linejoin="round" ><path d="M0.8 0.4 L10.8 8 L0.8 15.6 Z"/></g></svg>
<svg class="b" style="left:497.5px;top:455.4px;" width="14" height="16" viewBox="0 0 14 16"><g fill="none" stroke="#555" stroke-width="1.4" stroke-linecap="butt" stroke-linejoin="round" ><path d="M12 0.1 V15.1"/><path d="M0.5 0.5 L8.2 7.6 L0.5 14.7"/></g></svg>
<svg class="b" style="left:560.5px;top:455.8px;" width="14.5" height="15" viewBox="0 0 14.5 15"><g fill="none" stroke="#b2b2b2" stroke-width="1.4" stroke-linecap="butt" stroke-linejoin="round" ><rect x="0.7" y="2.2" width="13" height="12" rx="2"/><path d="M3.8 0.2 V3 M10.6 0.2 V3"/><path d="M3 6 H9.4 M3 8.6 H6.4" stroke-width="1.1"/></g></svg>
<svg class="b" style="left:0px;top:0px;" width="1" height="1" viewBox="0 0 1 1"><g fill="none" stroke="#555" stroke-width="1.5" stroke-linecap="butt" stroke-linejoin="round" ><circle cx="26" cy="110.8" r="5.6"/><path d="M29.81 114.94 L33.71 119.54"/></g></svg>
<svg class="b" style="left:0px;top:0px;" width="1" height="1" viewBox="0 0 1 1"><g fill="none" stroke="#1c1c1c" stroke-width="1.5" stroke-linejoin="round" stroke-linecap="butt"><path d="M23.9 144.9 H40.1 V159.4 Q40.1 164.4 35.1 164.4 H23.9 Z"/><path d="M27.2 150.2 H37.2 M30 153.2 H35.2" stroke-width="1.2"/><path d="M23.6 153.4 L27.4 157 L32.8 152.4" stroke-width="1.2"/></g></svg>
<svg class="b" style="left:0px;top:0px;" width="1" height="1" viewBox="0 0 1 1"><g fill="none" stroke="#1c1c1c" stroke-width="1.5" stroke-linejoin="round" stroke-linecap="butt"><circle cx="31.2" cy="184.8" r="3.1"/><rect x="25.6" y="190.6" width="11.4" height="5.6" rx="2.6"/><circle cx="24" cy="186" r="1.7" stroke-width="1.2"/><circle cx="38.6" cy="186" r="1.7" stroke-width="1.2"/><path d="M25.4 193.6 H22.8 Q20.9 193.6 20.9 191.8 Q21 190.2 23.4 190.2 H25.6" stroke-width="1.2"/><path d="M37.2 193.6 H39.8 Q41.7 193.6 41.7 191.8 Q41.6 190.2 39.2 190.2 H37" stroke-width="1.2"/></g></svg>
<svg class="b" style="left:0px;top:0px;" width="1" height="1" viewBox="0 0 1 1"><g fill="none" stroke="#1c1c1c" stroke-width="1.5" stroke-linejoin="round" stroke-linecap="butt"><path d="M21.3 212 V226.5 Q21.3 232.7 27.5 232.7 H41.8"/><path d="M27.2 228.4 V232.7 M33.4 224 V232.7 M39.6 220 V232.7"/><path d="M21.6 222.4 L25.6 219.2 M30 220.4 L39.4 213" stroke-width="1.2"/><path d="M27.7 218.6 L30.6 221.4 L27.7 224.2 L24.8 221.4 Z" stroke-width="1.2"/></g></svg>
<svg class="b" style="left:0px;top:0px;" width="1" height="1" viewBox="0 0 1 1"><g fill="none" stroke="#1c1c1c" stroke-width="1.5" stroke-linejoin="round" stroke-linecap="butt"><path d="M31 266.1 H21.6 V247.4 H37.5 V255.6"/><path d="M22.8 254.2 L27.6 259.6 L33.2 253.4"/><circle cx="36.1" cy="261.1" r="5.1" fill="#fff"/><path d="M35.6 258.4 V261.8 H37.6" stroke-width="1.1"/></g></svg>
<svg class="b" style="left:0px;top:0px;" width="1" height="1" viewBox="0 0 1 1"><g fill="none" stroke="#1c1c1c" stroke-width="1.5" stroke-linejoin="round" stroke-linecap="butt"><path d="M23.9 282.4 H37.6 V295.79999999999995 Q37.6 300.4 33.0 300.4 H23.9 Z"/><rect x="27.4" y="280.2" width="6.8" height="3.8" rx="1.4" fill="#fff"/><path d="M23.6 288.6 L27.6 292.8 L32.8 288"/></g></svg>
<svg class="b" style="left:0px;top:0px;" width="1" height="1" viewBox="0 0 1 1"><g fill="none" stroke="#1c1c1c" stroke-width="1.5" stroke-linejoin="round" stroke-linecap="butt"><path d="M21.7 315.6 H25.4 V324.4 L33.3 318.2 V323.4 L41.2 317.6 V334.6 H35.2 V331.2 A2.8 2.8 0 0 0 29.6 331.2 V334.6 H21.7 Z"/><path d="M25.2 325.2 L27.6 327.8 L33.2 322.6" stroke-width="1.2"/></g></svg>
<svg class="b" style="left:0px;top:0px;" width="1" height="1" viewBox="0 0 1 1"><g fill="none" stroke="#1c1c1c" stroke-width="1.5" stroke-linejoin="round" stroke-linecap="butt"><path d="M21.6 351.6 H41 V361.2 Q41 365.8 36.4 365.8 H21.6 Z"/><path d="M21.6 355.2 H41"/><path d="M24.6 356.6 L27.8 360.4 L31 356.6 M27.8 360.4 V363.4 M24.8 363.4 H30.4" stroke-width="1.2"/><path d="M31 356.8 Q36 358 40.6 356" stroke-width="1"/></g></svg>
<svg class="b" style="left:0px;top:0px;" width="1" height="1" viewBox="0 0 1 1"><g fill="none" stroke="#1c1c1c" stroke-width="1.5" stroke-linejoin="round" stroke-linecap="butt"><path d="M24.6 391 V385.2 H30.6 Q32.4 385.2 32.4 387 V392.6"/><path d="M23.2 398.4 H22.2 Q21.6 398.4 21.6 397.6 V392.8 Q21.6 391 23.4 391 H26.6 L29.4 394.2 H35.6 V398.4 H34.8 M27 398.4 H31"/><circle cx="25.1" cy="399.6" r="1.8"/><circle cx="33" cy="399.6" r="1.8"/><path d="M37.4 384.6 V397.4 H41.8"/></g></svg>
<svg class="b" style="left:0px;top:0px;" width="1" height="1" viewBox="0 0 1 1"><g fill="none" stroke="#1c1c1c" stroke-width="1.5" stroke-linejoin="round" stroke-linecap="butt"><rect x="21.6" y="429.4" width="19.4" height="8.4"/><path d="M21.6 429.4 L25 429.4 M41 429.4 L33.6 423.6 L27.2 429.4 H41" stroke-width="1.2"/><path d="M23.2 424 L27.2 428.6 L33.4 422" stroke-width="1.2"/><path d="M31.8 417 Q33.6 418.4 32.6 419.8 Q31.8 421 33.2 422" stroke-width="1.1"/></g></svg>
<svg class="b" style="left:0px;top:0px;" width="1" height="1" viewBox="0 0 1 1"><g fill="none" stroke="#1c1c1c" stroke-width="1.5" stroke-linejoin="round" stroke-linecap="butt"><path d="M21.6 456.6 H41 V465.59999999999997 Q41 470.2 36.4 470.2 H21.6 Z"/><path d="M27.6 456.4 V453 H34.8 V456.4"/><path d="M28.6 461 A3 3 0 1 0 28.6 465.4 H37.4 Q38.8 465.4 38.8 463.2 Q38.8 461 37.4 461 Z" stroke-width="1.2"/><path d="M24.4 459.8 L27.4 462.6 L31 458.8" stroke-width="1.1"/></g></svg>
<svg class="b" style="left:0px;top:0px;" width="1" height="1" viewBox="0 0 1 1"><g fill="none" stroke="#1c1c1c" stroke-width="1.5" stroke-linejoin="round" stroke-linecap="butt"><circle cx="31.6" cy="491.3" r="5.5"/><path d="M27.6 496.2 V504.8 L31.6 501.8 L35.6 504.8 V496.2"/><path d="M22.8 492.6 L27.2 497 L33.4 490.8" stroke-width="1.2"/></g></svg>
<svg class="b" style="left:0px;top:0px;" width="1" height="1" viewBox="0 0 1 1"><g fill="none" stroke="#1c1c1c" stroke-width="1.5" stroke-linejoin="round" stroke-linecap="butt"><rect x="21.6" y="523.8" width="19.4" height="12.8"/><circle cx="31.2" cy="530.2" r="2.6" stroke-width="1.2"/><path d="M21.8 527 A3 3 0 0 0 24.8 524 M37.8 524 A3 3 0 0 0 40.8 527 M40.8 533.4 A3 3 0 0 0 37.8 536.4 M24.8 536.4 A3 3 0 0 0 21.8 533.4" stroke-width="1.1"/><path d="M24.6 528 L28 532.2 Q30 533 32.4 529.4" stroke-width="1.1"/></g></svg>
<svg class="b" style="left:0px;top:0px;" width="1" height="1" viewBox="0 0 1 1"><g fill="none" stroke="#1c1c1c" stroke-width="1.5" stroke-linejoin="round" stroke-linecap="butt"><path d="M22.6 554.4 H39.2 V568.8 Q39.2 573.8 34.2 573.8 H22.6 Z"/><path d="M22.6 563 L28.6 568.6 L35 560.6" stroke-width="1.6"/></g></svg>
<svg class="b" style="left:0px;top:0px;" width="1" height="1" viewBox="0 0 1 1"><g fill="none" stroke="#1c1c1c" stroke-width="1.5" stroke-linejoin="round" stroke-linecap="butt"><path d="M23.9 588.7 H40.1 V603.2 Q40.1 608.2 35.1 608.2 H23.9 Z"/><path d="M27.2 594.0 H37.2 M30 597.0 H35.2" stroke-width="1.2"/><path d="M23.6 597.2 L27.4 600.8 L32.8 596.2" stroke-width="1.2"/></g></svg>
<svg class="b" style="left:0px;top:0px;" width="1" height="1" viewBox="0 0 1 1"><g fill="none" stroke="#1c1c1c" stroke-width="1.5" stroke-linejoin="round" stroke-linecap="butt"><circle cx="31.6" cy="632.3" r="9.7"/><path d="M27 623.8 Q29.6 626.4 28.2 628.2 Q26.4 629.6 27.6 631.8 Q29.8 633.4 32.2 632.4 Q33.4 630.2 35.4 630.2 Q36.6 628.2 35.2 626.4 Q33.6 625.6 34.6 623.2" stroke-width="1.2"/><path d="M22.2 634.6 Q25 636.2 27.6 635 Q29.8 633.8 31.2 636 Q32 638.4 34.6 637.6 Q36.6 636.4 37.6 638.6 L39 638.8" stroke-width="1.2"/><path d="M26.4 640.4 Q28.6 638 31 639 Q32.8 640.4 33.4 641.8" stroke-width="1.2"/><path d="M23.2 627.4 Q25.4 629.2 24.4 631.6" stroke-width="1.1"/><path d="M36 632 Q38.6 632 39 635 Q40 636 41 634.6" stroke-width="1.1"/></g></svg>
<svg class="b" style="left:0px;top:0px;" width="1" height="1" viewBox="0 0 1 1"><g fill="none" stroke="#1c1c1c" stroke-width="1.5" stroke-linejoin="round" stroke-linecap="butt"><circle cx="31.3" cy="658.6" r="2.1"/><path d="M31.3 660.8 V672.2 M23.9 672.2 V666 H38.5 V672.2"/><circle cx="23.9" cy="674.6" r="2.2"/><circle cx="31.3" cy="674.6" r="2.2"/><circle cx="38.5" cy="674.6" r="2.2"/><path d="M24 663 L27.2 667 L31.2 662.6" stroke-width="1.1"/></g></svg>
<svg class="b" style="left:0px;top:0px;" width="1" height="1" viewBox="0 0 1 1"><g fill="none" stroke="#1c1c1c" stroke-width="1.5" stroke-linejoin="round" stroke-linecap="butt"><path d="M40.90 698.45 L40.90 702.35 L38.51 702.79 L38.09 703.81 L39.47 705.81 L36.71 708.57 L34.71 707.19 L33.69 707.61 L33.25 710.00 L29.35 710.00 L28.91 707.61 L27.89 707.19 L25.89 708.57 L23.13 705.81 L24.51 703.81 L24.09 702.79 L21.70 702.35 L21.70 698.45 L24.09 698.01 L24.51 696.99 L23.13 694.99 L25.89 692.23 L27.89 693.61 L28.91 693.19 L29.35 690.80 L33.25 690.80 L33.69 693.19 L34.71 693.61 L36.71 692.23 L39.47 694.99 L38.09 696.99 L38.51 698.01Z" stroke-width="1.3"/><path d="M33.2 695.8 A3.4 3.4 0 1 0 36.6 699.8 L34.4 700 L32.8 698.2 Z M30.6 701.4 L24.4 707.2 L26 708.8 L32.2 703" fill="#fff" stroke-width="1.2"/></g></svg>
<svg class="b" style="left:0px;top:0px;" width="1" height="1" viewBox="0 0 1 1"><g fill="none" stroke="#1c1c1c" stroke-width="1.5" stroke-linejoin="round" stroke-linecap="butt"><path d="M24.8 727.2 A4 4 0 0 0 22.6 733.6 Q24.6 735.4 27.2 734.6 L35.6 743 L37.8 740.8 L29.4 732.4 Q30.2 729.6 28.2 727.6 L26.4 730.4 L24.4 729.8 Z" stroke-width="1.2"/><path d="M33.2 726 Q36 725.6 37.6 727.6 Q38.8 729.6 38 731.4 L40.6 736.6 L38.4 738.4 L31.4 731.6 Q31.2 729 33.2 728.2" stroke-width="1.2"/></g></svg>
<svg class="b" style="left:0px;top:0px;" width="1" height="1" viewBox="0 0 1 1"><g fill="none" stroke="#1c1c1c" stroke-width="1.5" stroke-linejoin="round" stroke-linecap="butt"><path d="M21.2 763.2 H41.2 V773.0 Q41.2 777.6 36.6 777.6 H21.2 Z"/><path d="M27.6 763 V760 H34.8 V763"/><path d="M21.4 767.4 H24.8 L26.6 770.4 L28.4 767.4 H34 L35.4 770 L36.8 767.4 H41" stroke-width="1.2"/></g></svg>
<svg class="b" style="left:0;top:0;pointer-events:none" width="1280" height="960" viewBox="0 0 1280 960"><rect x="479" y="10" width="1.5" height="21.5" fill="#6a6a6a"/><rect x="0" y="83" width="1280" height="1.3" fill="#e9e9e9"/><rect x="14.4" y="56.75" width="15.6" height="1.5" fill="#444"/><rect x="14.4" y="62.95" width="15.6" height="1.5" fill="#444"/><rect x="14.4" y="69.05" width="15.6" height="1.5" fill="#444"/><rect x="144.8" y="82.5" width="263.4" height="2" fill="#fff"/><rect x="154.6" y="80.6" width="243.3" height="3.3" fill="#2a5fd6"/><rect x="52" y="84" width="2" height="876" fill="#8d8d8d"/><rect x="54.2" y="120.6" width="1226" height="1.5" fill="#e4e4e4"/><rect x="471.8" y="92" width="1.4" height="20.5" fill="#7c7c7c"/><rect x="655.2" y="92" width="1.4" height="20.5" fill="#7c7c7c"/><rect x="54.2" y="402.2" width="1226" height="1.6" fill="#6e6e6e"/><rect x="57.8" y="441.3" width="109.2" height="2.2" fill="#3a6fd6"/><rect x="54.2" y="480" width="1226" height="1.2" fill="#e4e4e4"/><rect x="351.3" y="452" width="1.4" height="20.5" fill="#7c7c7c"/><rect x="535" y="452" width="1.4" height="20.5" fill="#7c7c7c"/><rect x="618" y="452" width="1.4" height="20.5" fill="#7c7c7c"/><rect x="54.2" y="515.6" width="1226" height="1.4" fill="#e0e0e0"/><rect x="54" y="545.8" width="1226" height="1.3" fill="#e5e5e5"/><rect x="54" y="575.67" width="1226" height="1.3" fill="#e5e5e5"/><rect x="54" y="605.54" width="1226" height="1.3" fill="#e5e5e5"/><rect x="54" y="635.41" width="1226" height="1.3" fill="#e5e5e5"/><rect x="54" y="665.28" width="1226" height="1.3" fill="#e5e5e5"/><rect x="54" y="695.15" width="1226" height="1.3" fill="#e5e5e5"/><rect x="54" y="725.02" width="1226" height="1.3" fill="#e5e5e5"/><rect x="54" y="754.89" width="1226" height="1.3" fill="#e5e5e5"/><rect x="54" y="784.76" width="1226" height="1.3" fill="#e5e5e5"/><rect x="54" y="814.6299999999999" width="1226" height="1.3" fill="#e5e5e5"/><rect x="54" y="844.5" width="1226" height="1.3" fill="#e5e5e5"/><rect x="54" y="874.3699999999999" width="1226" height="1.3" fill="#e5e5e5"/><rect x="54" y="904.24" width="1226" height="1.3" fill="#e5e5e5"/><rect x="54" y="934.1099999999999" width="1226" height="1.3" fill="#e5e5e5"/><rect x="54" y="963.98" width="1226" height="1.3" fill="#e5e5e5"/></svg>
</div></body></html>
